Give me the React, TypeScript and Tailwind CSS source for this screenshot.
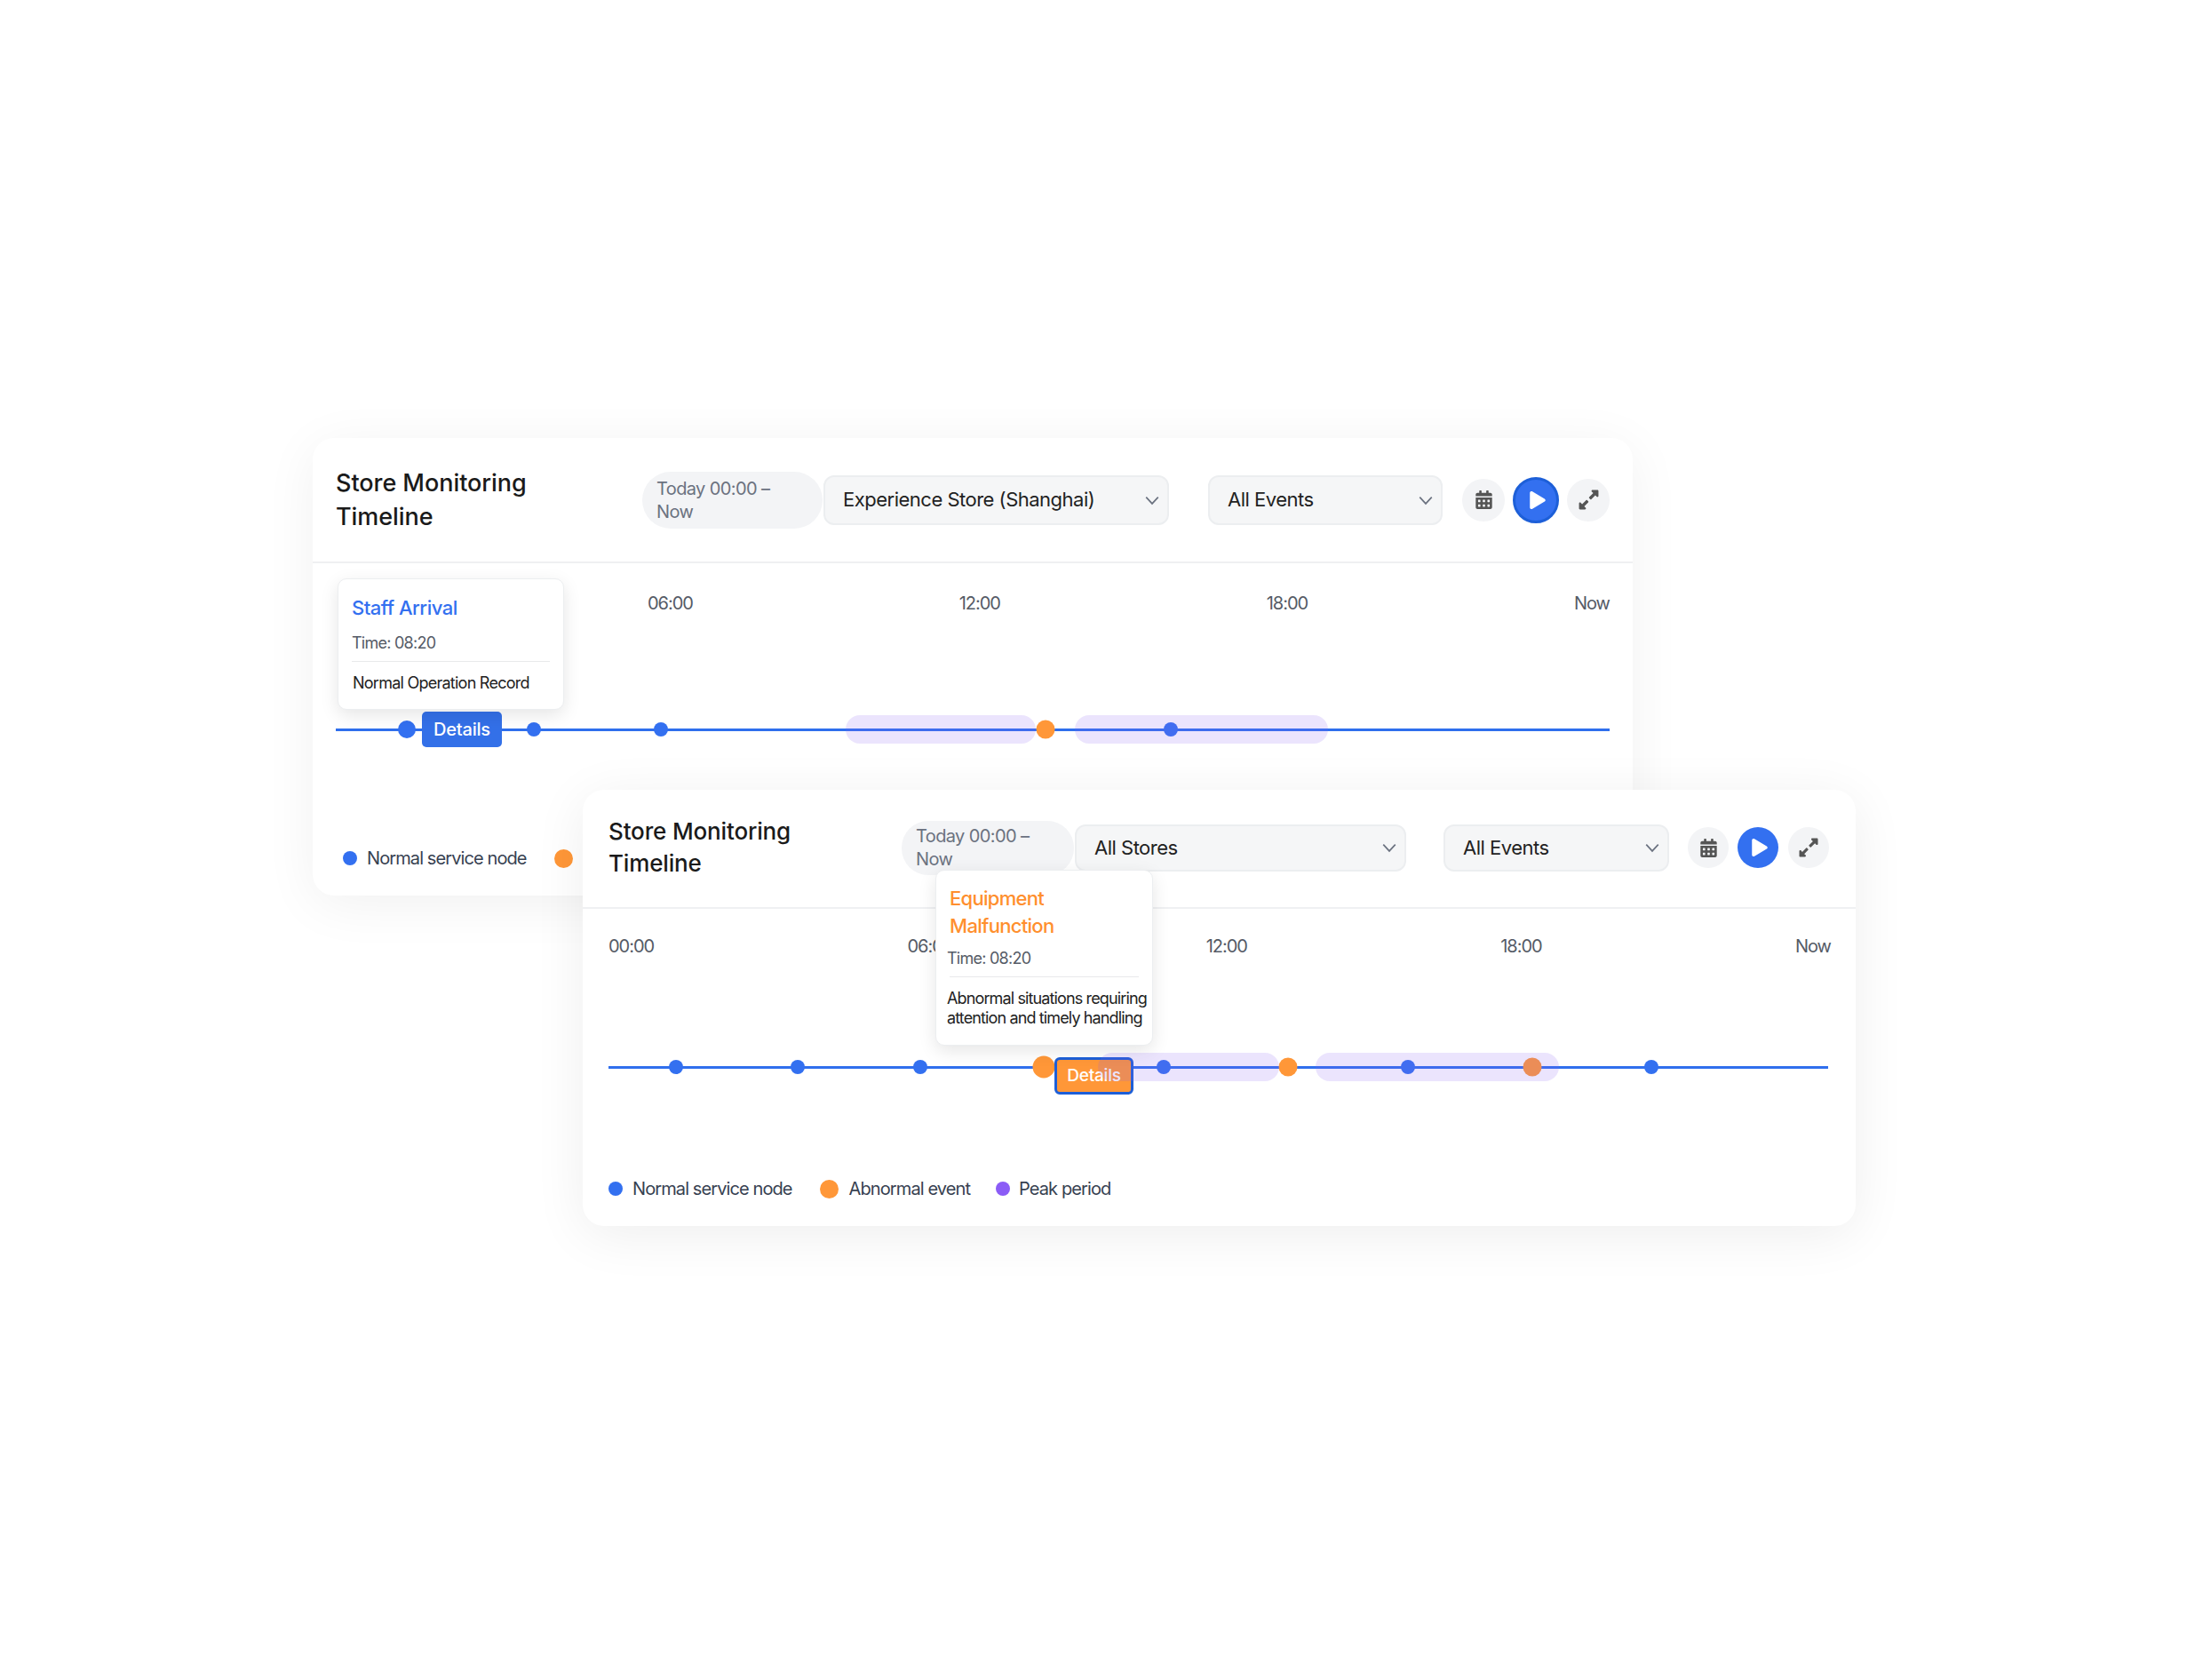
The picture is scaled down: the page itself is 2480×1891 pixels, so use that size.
import React from "react";
import { FaCalendarAlt, FaExpandAlt, FaPlay } from "react-icons/fa";

type Dot = { x: number; size: "w-[16px] h-[16px]" | "w-[20px] h-[20px]" | "w-[21px] h-[21px]" | "w-[25px] h-[25px]"; color: string };
type Band = { x: number; w: number };

const FONT = "font-['Inter','Noto_Sans',sans-serif]";

const Chevron = ({ className }: { className: string }) => (
  <svg viewBox="0 0 16 16" className={className} fill="none" stroke="#6b7280" strokeWidth="1.5">
    <path d="M2 5l6 6.5L14 5" />
  </svg>
);

const Select = ({ label, className }: { label: string; className: string }) => (
  <div
    className={`flex items-center justify-between rounded-[12px] border-2 border-[#eceef0] bg-[#f5f6f7] pl-[20px] pr-[8px] text-[22px] tracking-[-0.5px] text-[#222] ${className}`}
  >
    <span>{label}</span>
    <Chevron className="h-[18px] w-[18px]" />
  </div>
);

const Legend = () => (
  <div className="flex h-[28px] items-center text-[20px] leading-[28px] tracking-[-0.9px] text-[#374151]">
    <span className="h-[16px] w-[16px] rounded-full bg-[#3370f0]" />
    <span className="ml-[11px]">Normal service node</span>
    <span className="ml-[31px] h-[21px] w-[21px] rounded-full bg-[#ff9738]" />
    <span className="ml-[12px]">Abnormal event</span>
    <span className="ml-[29px] h-[16px] w-[16px] rounded-full bg-[#8b5cf6]" />
    <span className="ml-[10px]">Peak period</span>
  </div>
);

const TimeLabels = ({ className, hideFirst }: { className: string; hideFirst?: boolean }) => (
  <div className={`flex justify-between text-[20px] leading-[28px] tracking-[-1px] text-[#555b66] ${className}`}>
    <span className={hideFirst ? "invisible" : ""}>00:00</span>
    <span>06:00</span>
    <span>12:00</span>
    <span>18:00</span>
    <span>Now</span>
  </div>
);

const Track = ({
  dots,
  bands,
  children,
  className,
}: {
  dots: Dot[];
  bands: Band[];
  children: React.ReactNode;
  className: string;
}) => (
  <div className={`relative h-[40px] ${className}`}>
    <div className="absolute inset-x-0 top-[19px] h-[3px] bg-[#2f6fed]" />
    {dots.map((d, i) => (
      <span
        key={i}
        className={`absolute top-[20px] -translate-x-1/2 -translate-y-1/2 rounded-full ${d.size} ${d.color}`}
        style={{ left: d.x }}
      />
    ))}
    {children}
    {bands.map((b, i) => (
      <span
        key={i}
        className="absolute top-[4px] h-[32px] rounded-[16px] bg-[#8b5cf6]/[0.17]"
        style={{ left: b.x, width: b.w }}
      />
    ))}
  </div>
);

const dot16 = "w-[16px] h-[16px]" as const;
const dot21 = "w-[21px] h-[21px]" as const;

export default function App() {
  return (
    <div className={`min-h-[1891px] overflow-hidden bg-white pt-[493px] ${FONT}`}>
      {/* back card */}
      <div className="relative ml-[352px] w-[1486px] rounded-[24px] bg-white shadow-[0_10px_60px_rgba(0,0,0,0.06)]">
        <div className="flex h-[141px] items-center border-b-2 border-[#eff0f2] px-[26px]">
          <h2 className="w-[345px] text-[27px] font-medium leading-[38px] tracking-[-0.05px] text-[#1a1a1a]">
            Store Monitoring
            <br />
            Timeline
          </h2>
          <div className="flex h-[64px] w-[203px] items-center rounded-[32px] bg-[#f3f4f6] pl-[16px] text-[20px] leading-[26px] tracking-[-0.6px] text-[#6b7280]">
            Today 00:00 –
            <br />
            Now
          </div>
          <Select label="Experience Store (Shanghai)" className="ml-[1px] h-[56px] w-[389px]" />
          <Select label="All Events" className="ml-[44px] h-[56px] w-[264px]" />
          <button className="ml-[22px] flex h-[48px] w-[48px] items-center justify-center rounded-full bg-[#f3f4f6] text-[#555]">
            <FaCalendarAlt className="h-[21px] w-[21px]" />
          </button>
          <button className="ml-[9px] flex h-[52px] w-[52px] items-center justify-center rounded-full border-[3px] border-[#1d5fd8] bg-[#3370f0] pl-[3px] text-white">
            <FaPlay className="h-[20px] w-[20px]" />
          </button>
          <button className="ml-[9px] flex h-[48px] w-[48px] items-center justify-center rounded-full bg-[#f3f4f6] text-[#555]">
            <FaExpandAlt className="h-[25px] w-[25px]" />
          </button>
        </div>
        <div className="px-[26px] pb-[28px]">
          <TimeLabels className="mt-[31px]" hideFirst />
          <Track
            className="mt-[108px]"
            dots={[
              { x: 80, size: "w-[20px] h-[20px]", color: "bg-[#3370f0]" },
              { x: 223, size: dot16, color: "bg-[#3370f0]" },
              { x: 366, size: dot16, color: "bg-[#3370f0]" },
              { x: 799, size: dot21, color: "bg-[#ff9738]" },
              { x: 940, size: dot16, color: "bg-[#3370f0]" },
            ]}
            bands={[
              { x: 574, w: 214 },
              { x: 832, w: 285 },
            ]}
          >
            <button className="absolute left-[97px] top-0 h-[40px] w-[90px] rounded-[5px] bg-[#3370e8] text-[20px] font-medium tracking-[-0.2px] text-white">
              Details
            </button>
            <div className="absolute bottom-[42px] left-[2px] w-[255px] rounded-[10px] border border-[#eceef0] bg-white px-[15px] pb-[16px] pt-[17px] shadow-[0_6px_20px_rgba(0,0,0,0.1)]">
              <div className="text-[22px] font-medium leading-[30px] tracking-[-0.5px] text-[#3370f0]">Staff Arrival</div>
              <div className="mt-[12px] text-[18px] leading-[26px] tracking-[-0.75px] text-[#555b66]">Time: 08:20</div>
              <div className="mt-[7px] border-t border-[#e8e9eb]" />
              <div className="ml-[1px] mt-[11px] whitespace-nowrap text-[18px] leading-[26px] tracking-[-0.75px] text-[#222]">
                Normal Operation Record
              </div>
            </div>
          </Track>
          <div className="ml-[8px] mt-[111px]">
            <Legend />
          </div>
        </div>
      </div>

      {/* front card */}
      <div className="relative ml-[656px] mt-[-119px] w-[1433px] rounded-[24px] bg-white shadow-[0_10px_60px_rgba(0,0,0,0.07)]">
        <div className="flex h-[134px] items-center border-b-2 border-[#eff0f2] pb-[2px] pl-[29px]">
          <h2 className="w-[330px] text-[26px] font-medium leading-[36px] tracking-[-0.15px] text-[#1a1a1a]">
            Store Monitoring
            <br />
            Timeline
          </h2>
          <div className="flex h-[61px] w-[194px] items-center rounded-[30px] bg-[#f3f4f6] pl-[16px] text-[20px] leading-[26px] tracking-[-0.6px] text-[#6b7280]">
            Today 00:00 –
            <br />
            Now
          </div>
          <Select label="All Stores" className="ml-[1px] h-[53px] w-[373px]" />
          <Select label="All Events" className="ml-[42px] h-[53px] w-[254px]" />
          <button className="ml-[21px] flex h-[46px] w-[46px] items-center justify-center rounded-full bg-[#f3f4f6] text-[#555]">
            <FaCalendarAlt className="h-[21px] w-[21px]" />
          </button>
          <button className="ml-[10px] flex h-[46px] w-[46px] items-center justify-center rounded-full bg-[#3370f0] pl-[3px] text-white">
            <FaPlay className="h-[20px] w-[20px]" />
          </button>
          <button className="ml-[11px] flex h-[46px] w-[46px] items-center justify-center rounded-full bg-[#f3f4f6] text-[#555]">
            <FaExpandAlt className="h-[24px] w-[24px]" />
          </button>
        </div>
        <div className="pb-[28px] pl-[29px] pr-[31px]">
          <TimeLabels className="-mr-[3px] mt-[28px]" />
          <Track
            className="mt-[102px]"
            dots={[
              { x: 76, size: dot16, color: "bg-[#3370f0]" },
              { x: 213, size: dot16, color: "bg-[#3370f0]" },
              { x: 351, size: dot16, color: "bg-[#3370f0]" },
              { x: 490, size: "w-[25px] h-[25px]", color: "bg-[#ff9738]" },
              { x: 625, size: dot16, color: "bg-[#3370f0]" },
              { x: 765, size: dot21, color: "bg-[#ff9738]" },
              { x: 900, size: dot16, color: "bg-[#3370f0]" },
              { x: 1040, size: dot21, color: "bg-[#ff9738]" },
              { x: 1174, size: dot16, color: "bg-[#3370f0]" },
            ]}
            bands={[
              { x: 551, w: 204 },
              { x: 796, w: 274 },
            ]}
          >
            <button className="absolute left-[502px] top-[9px] h-[42px] w-[89px] rounded-[6px] border-[3px] border-[#1d5fd8] bg-[#ff9738] text-[19px] font-medium tracking-[-0.2px] text-white">
              Details
            </button>
            <div className="absolute bottom-[44px] left-[368px] w-[245px] rounded-[10px] border border-[#eceef0] bg-white px-[15px] pb-[19px] pt-[16px] shadow-[0_6px_20px_rgba(0,0,0,0.1)]">
              <div className="text-[22px] font-medium leading-[31px] tracking-[-0.7px] text-[#ff8f2e]">
                Equipment
                <br />
                Malfunction
              </div>
              <div className="-ml-[3px] mt-[8px] text-[18px] leading-[26px] tracking-[-0.75px] text-[#555b66]">Time: 08:20</div>
              <div className="mt-[7px] border-t border-[#e8e9eb]" />
              <div className="-ml-[3px] -mr-[10px] mt-[13px] whitespace-nowrap text-[18px] leading-[22px] tracking-[-0.87px] text-[#222]">
                Abnormal situations requiring
                <br />
                attention and timely handling
              </div>
            </div>
          </Track>
          <div className="mt-[103px]">
            <Legend />
          </div>
        </div>
      </div>
    </div>
  );
}
